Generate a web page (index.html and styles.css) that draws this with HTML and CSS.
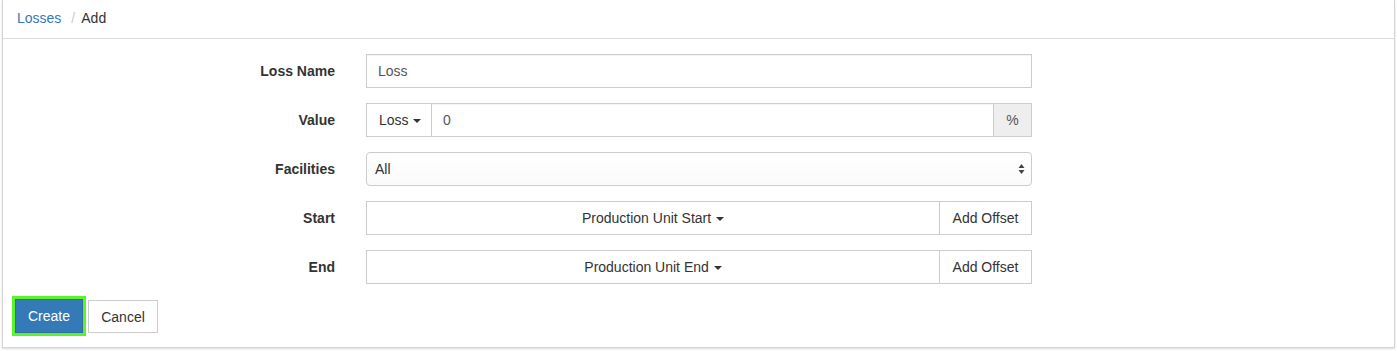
FILE: index.html
```html
<!DOCTYPE html>
<html lang="en">
<head>
    <meta charset="UTF-8">
    <title>Losses / Add</title>
    <link rel="stylesheet" href="styles.css">
</head>
<body>
    <div class="panel">
        <!-- Breadcrumb -->
        <div class="panel-heading">
            <a href="#" class="crumb-link">Losses</a>
            <span class="crumb-sep">/</span>
            <span class="crumb-active">Add</span>
        </div>

        <div class="panel-body">
            <form class="loss-form">
                <div class="form-row">
                    <label for="lossName">Loss Name</label>
                    <input type="text" id="lossName" class="form-control" value="Loss">
                </div>

                <div class="form-row">
                    <label for="lossValue">Value</label>
                    <div class="input-group">
                        <button type="button" class="btn btn-default btn-type">Loss <span class="caret"></span></button>
                        <input type="text" id="lossValue" class="form-control" value="0">
                        <span class="addon">%</span>
                    </div>
                </div>

                <div class="form-row">
                    <label for="facilities">Facilities</label>
                    <div class="select-box" id="facilities">
                        <span>All</span>
                        <svg class="select-arrows" width="7" height="12" viewBox="0 0 7 12">
                            <path d="M3.5 1 L6.5 5 L0.5 5 Z" fill="#444"/>
                            <path d="M3.5 11 L6.5 7 L0.5 7 Z" fill="#444"/>
                        </svg>
                    </div>
                </div>

                <div class="form-row">
                    <label>Start</label>
                    <div class="input-group">
                        <button type="button" class="btn btn-default btn-wide">Production Unit Start <span class="caret"></span></button>
                        <button type="button" class="btn btn-default btn-offset">Add Offset</button>
                    </div>
                </div>

                <div class="form-row">
                    <label>End</label>
                    <div class="input-group">
                        <button type="button" class="btn btn-default btn-wide">Production Unit End <span class="caret"></span></button>
                        <button type="button" class="btn btn-default btn-offset">Add Offset</button>
                    </div>
                </div>

                <div class="button-row">
                    <button type="button" class="btn btn-primary">Create</button>
                    <button type="button" class="btn btn-default btn-cancel">Cancel</button>
                </div>
            </form>
        </div>
    </div>
</body>
</html>
```

FILE: styles.css
```css
body {
    margin: 0;
    padding: 0 2px 3px 2px;
    font-family: "Liberation Sans", Arial, sans-serif;
    font-size: 14px;
    color: #333;
    background-color: #fff;
}
.panel {
    border: 1px solid #d4d4d4;
    border-top: none;
    background-color: #fff;
    box-shadow: 0 1px 2px rgba(0, 0, 0, 0.15);
}
.panel-heading {
    height: 38px;
    line-height: 37px;
    padding-left: 14px;
    border-bottom: 1px solid #ddd;
}
.crumb-link {
    color: #337ab7;
    text-decoration: none;
}
.crumb-sep {
    color: #ccc;
    padding: 0 3px 0 6px;
}
.crumb-active {
    color: #333;
}
.panel-body {
    padding: 15px 0 14px 12px;
}
.form-row {
    display: grid;
    grid-template-columns: 320px 666px;
    column-gap: 31px;
    margin-bottom: 15px;
}
.form-row label {
    text-align: right;
    font-weight: bold;
    line-height: 34px;
}
.form-control {
    box-sizing: border-box;
    height: 34px;
    width: 100%;
    padding: 6px 11px;
    font-family: inherit;
    font-size: 14px;
    color: #555;
    border: 1px solid #ccc;
    border-radius: 0;
    background-color: #fff;
    box-shadow: inset 0 1px 1px rgba(0, 0, 0, 0.05);
}
.input-group {
    display: flex;
    height: 34px;
}
.input-group .form-control {
    flex: 1;
    border-left: none;
    border-right: none;
}
.addon {
    box-sizing: border-box;
    width: 39px;
    line-height: 32px;
    text-align: center;
    background-color: #eee;
    border: 1px solid #ccc;
    color: #555;
}
.btn {
    box-sizing: border-box;
    height: 34px;
    padding: 6px 12px;
    font-family: inherit;
    font-size: 14px;
    line-height: 20px;
    white-space: nowrap;
    cursor: pointer;
    border: 1px solid #ccc;
    border-radius: 0;
}
.btn-default {
    background-color: #fff;
    color: #333;
}
.btn-type {
    width: 66px;
    padding: 6px 0 6px 12px;
    text-align: left;
}
.btn-wide {
    flex: 1;
    border-right: none;
}
.btn-offset {
    width: 93px;
    padding: 6px 0;
}
.caret {
    display: inline-block;
    width: 0;
    height: 0;
    margin-left: 1px;
    vertical-align: middle;
    border-top: 4px solid #333;
    border-left: 4px solid transparent;
    border-right: 4px solid transparent;
}
.select-box {
    box-sizing: border-box;
    height: 34px;
    display: flex;
    align-items: center;
    justify-content: space-between;
    padding: 0 6px 0 8px;
    border: 1px solid #ccc;
    border-radius: 4px;
    background: linear-gradient(#fff, #fafafa);
    color: #333;
}
.button-row {
    display: flex;
    gap: 5px;
}
.btn-primary {
    width: 68px;
    background-color: #337ab7;
    border-color: #2e6da4;
    color: #fff;
    outline: 3px solid #5cf22d;
    outline-offset: 0;
}
.btn-cancel {
    width: 70px;
    height: 33px;
    margin-top: 1px;
}
```
